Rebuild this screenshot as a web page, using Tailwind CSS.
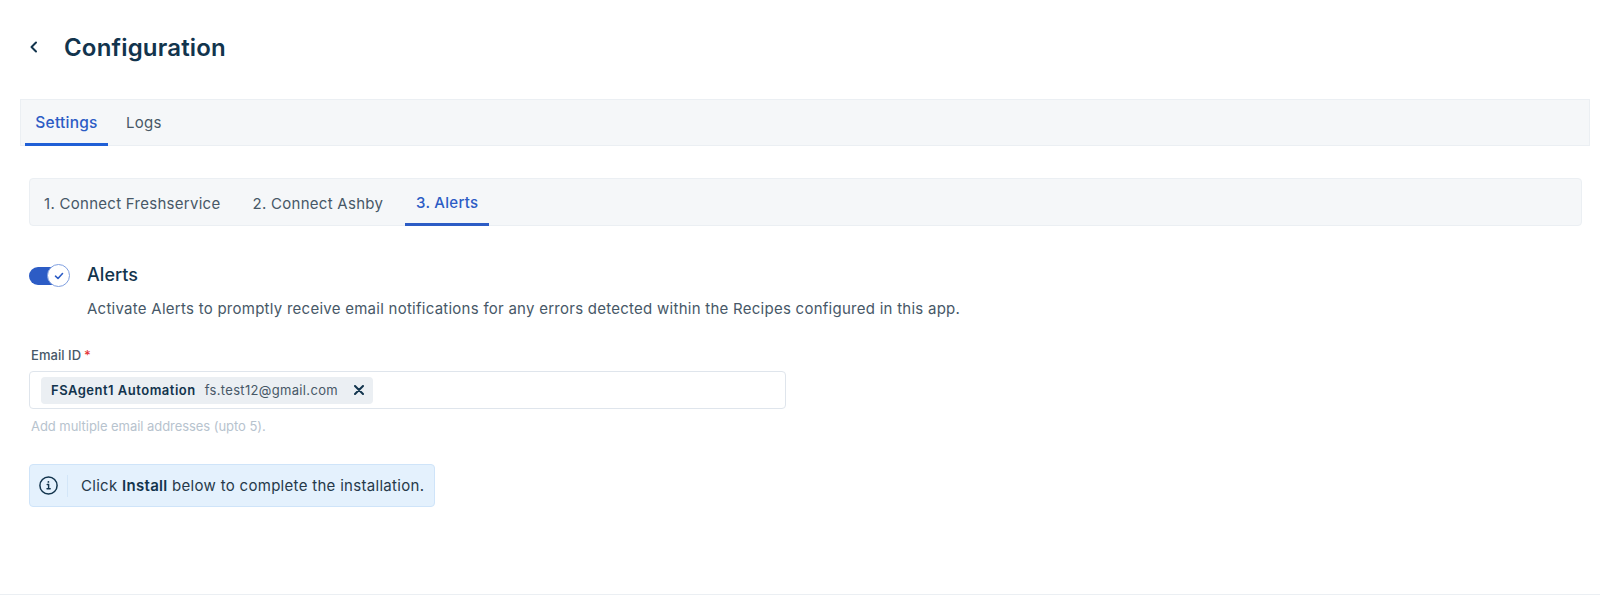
<!doctype html>
<html><head><meta charset="utf-8"><script src="https://cdn.jsdelivr.net/npm/@tailwindcss/browser@4"></script></head>
<body class="bg-white font-['Inter',sans-serif] text-[#12344d] antialiased">
<div class="relative h-[598px] w-[1600px] overflow-hidden">
  <header class="flex h-[99px] items-start pl-[29px] pt-[33px]">
    <svg class="mt-[8px] h-[12px] w-[10px]" viewBox="0 0 10 12" fill="none" stroke="#12344d" stroke-width="2" stroke-linecap="round" stroke-linejoin="round"><path d="M7 1.5 2.5 6 7 10.5"/></svg>
    <h1 class="ml-[25px] text-[24px] leading-[30px] font-semibold tracking-[0.18px]">Configuration</h1>
  </header>
  <nav class="ml-[20px] flex h-[47px] w-[1570px] border border-[#ebeff3] bg-[#f5f7f9] pl-[4px]">
    <div class="flex h-[46px] w-[83px] items-center justify-center border-b-[3px] border-[#1f5fd6] pt-[3px] text-[15.5px] font-medium tracking-[0.25px] text-[#2c5cc5]">Settings</div>
    <div class="flex h-[46px] items-center pl-[18px] text-[15px] tracking-[0.3px] text-[#475867]">Logs</div>
  </nav>
  <nav class="ml-[29px] mt-[32px] flex h-[48px] w-[1553px] rounded-[4px] border border-[#ebeff3] bg-[#f5f7f9] pl-[14px] text-[15px] tracking-[0.28px] text-[#475867]">
    <div class="flex h-[47px] items-center pt-[4px]">1. Connect Freshservice</div>
    <div class="ml-[32px] flex h-[47px] items-center pt-[4px]">2. Connect Ashby</div>
    <div class="ml-[22px] flex h-[47px] w-[84px] items-center justify-center border-b-[3px] border-[#2c5cc5] pt-[5px] font-medium text-[#2c5cc5]">3. Alerts</div>
  </nav>
  <section class="ml-[29px] mt-[38px] w-[1000px]">
    <div class="flex items-start">
      <div class="relative h-[23px] w-[41px] shrink-0">
        <div class="absolute left-0 top-[3px] h-[18px] w-[36px] rounded-full bg-[#2c5cc5]"></div>
        <div class="absolute left-[18px] top-0 flex h-[23px] w-[23px] items-center justify-center rounded-full border border-[#7f9fe0] bg-white">
          <svg class="h-[10px] w-[10px]" viewBox="0 0 10 10" fill="none" stroke="#2c5cc5" stroke-width="1.6" stroke-linecap="round" stroke-linejoin="round"><path d="M1.5 5.2 4 7.5l4.5-5"/></svg>
        </div>
      </div>
      <div class="ml-[17px]">
        <div class="text-[18px] leading-[22px] font-medium tracking-[0.05px]">Alerts</div>
        <p class="mt-[13px] whitespace-nowrap text-[15px] leading-[20px] tracking-[0.26px] text-[#475867]">Activate Alerts to promptly receive email notifications for any errors detected within the Recipes configured in this app.</p>
      </div>
    </div>
    <label class="mt-[28px] flex h-[18px] items-center pl-[2px] text-[13px] font-medium tracking-[0.05px] text-[#475867]">Email ID<span class="ml-[3px] text-[#e43538]">*</span></label>
    <div class="mt-[6px] flex h-[38px] w-[757px] items-center rounded-[4px] border border-[#dfe5ec] bg-white pl-[11px]">
      <div class="flex h-[27px] w-[332px] items-center rounded-[4px] bg-[#ebeff3] pl-[10px] text-[13px]">
        <span class="pt-[2px] font-semibold tracking-[0.5px]">FSAgent1 Automation</span>
        <span class="ml-[9px] pt-[2px] tracking-[0.33px] text-[#475867]">fs.test12@gmail.com</span>
        <svg class="ml-[16px] h-[10px] w-[10px]" viewBox="0 0 10 10" fill="none" stroke="#12344d" stroke-width="2" stroke-linecap="round"><path d="m1 1 8 8M9 1 1 9"/></svg>
      </div>
    </div>
    <p class="mt-[9px] pl-[2px] text-[13px] leading-[16px] tracking-[-0.05px] text-[#b7c3ce]">Add multiple email addresses (upto 5).</p>
    <div class="mt-[30px] flex h-[43px] w-[406px] items-center rounded-[4px] border border-[#cfe4f9] bg-[#e4f1fd] pl-[9px]">
      <svg class="h-[19px] w-[19px] shrink-0" viewBox="0 0 19 19" fill="none" stroke="#12344d" stroke-width="1.5" stroke-linecap="round"><circle cx="9.5" cy="9.5" r="8.6"/><path d="M8.2 8.5h1.4v4.2M8 12.8h3.2" stroke-width="1.4"/><circle cx="9.4" cy="5.9" r=".9" fill="#12344d" stroke="none"/></svg>
      <div class="ml-[9px] h-[22px] w-px bg-[#d3e6f8]"></div>
      <p class="ml-[13px] whitespace-nowrap pt-[2px] text-[15px] tracking-[0.3px] text-[#26394a]">Click <b class="font-semibold text-[#12344d]">Install</b> below to complete the installation.</p>
    </div>
  </section>
  <div class="absolute bottom-[3px] left-0 h-px w-full bg-[#ebeff3]"></div>
</div>
</body></html>
